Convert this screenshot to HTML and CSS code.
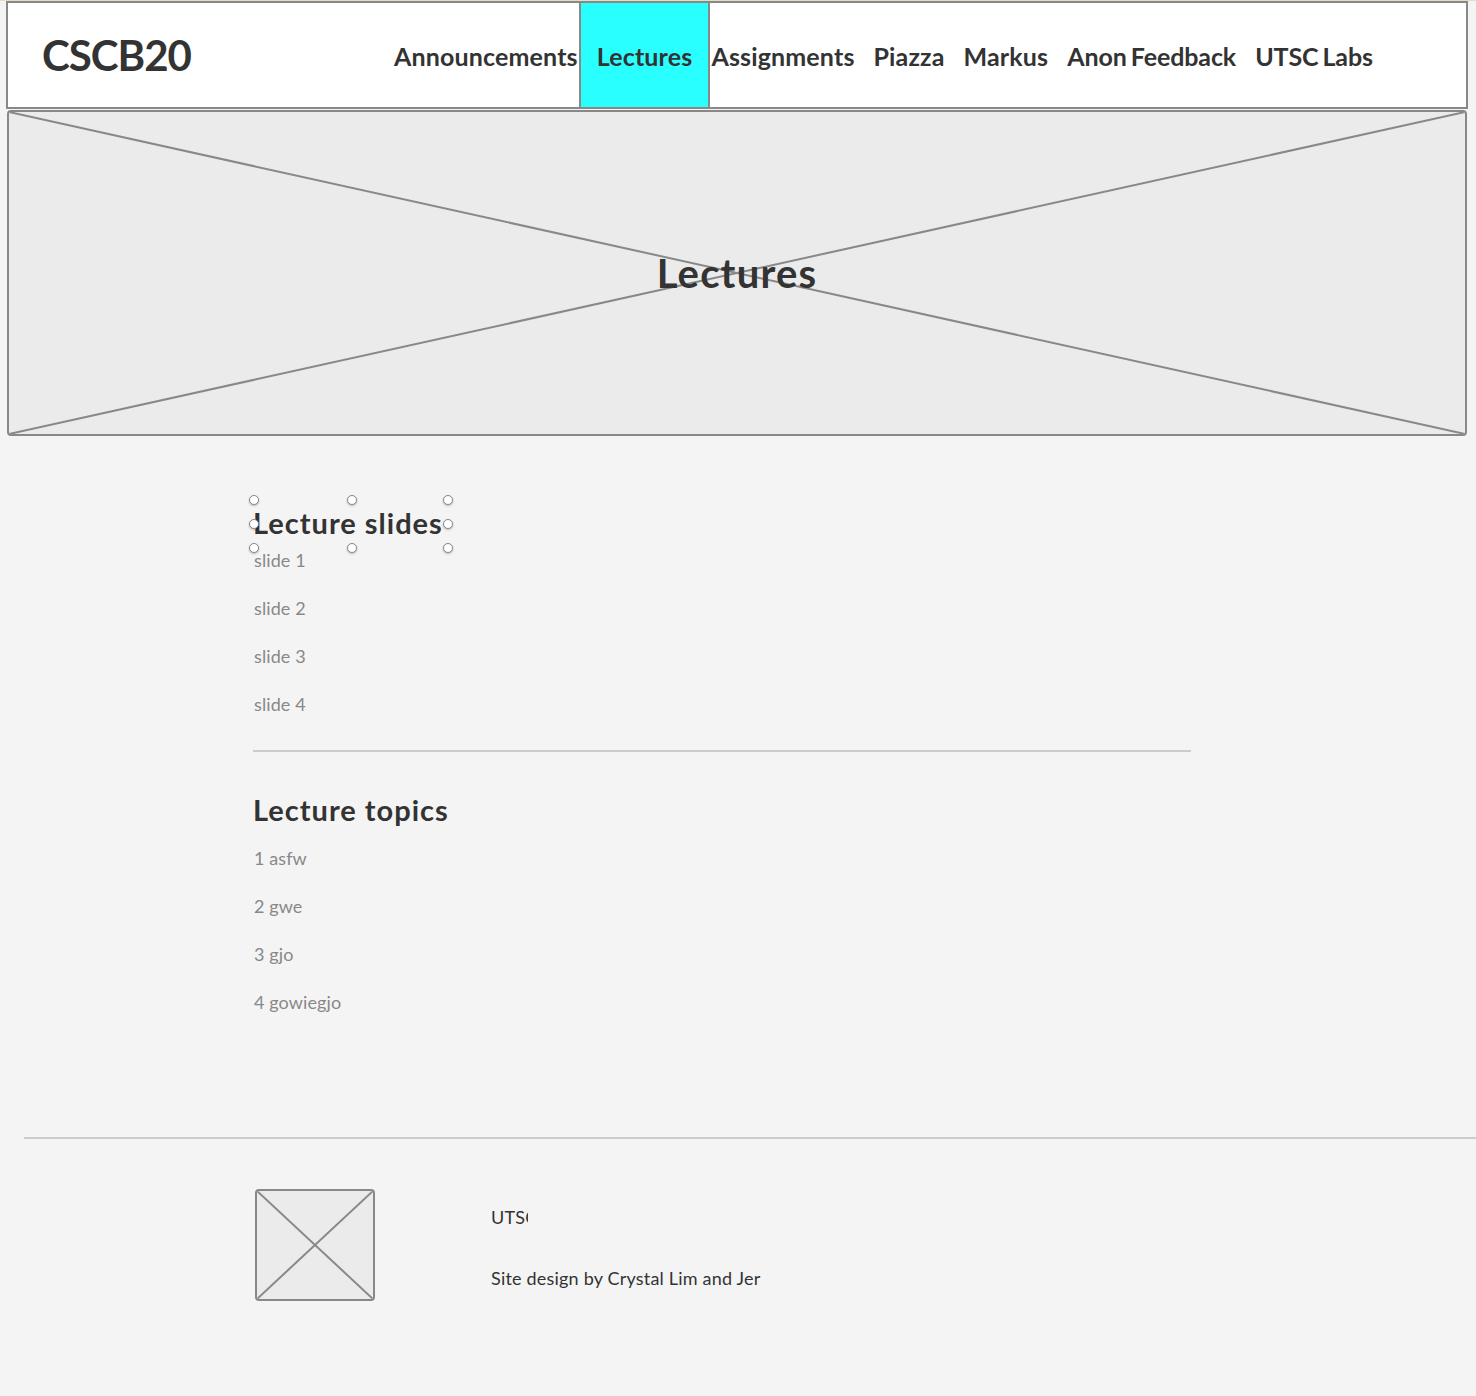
FILE: index.html
```html
<!DOCTYPE html>
<html lang="en">
<head>
<meta charset="utf-8">
<title>CSCB20 - Lectures</title>
<link rel="stylesheet" href="styles.css">
</head>
<body>
<div class="topline"></div>
<header class="site-header">
  <div class="logo">CSCB20</div>
  <nav class="nav">
    <a class="nav-link first" href="#">Announcements</a>
    <a class="nav-link active" href="#">Lectures</a>
    <a class="nav-link after-active" href="#">Assignments</a>
    <a class="nav-link" href="#">Piazza</a>
    <a class="nav-link" href="#">Markus</a>
    <a class="nav-link tight" href="#">Anon Feedback</a>
    <a class="nav-link tight" href="#">UTSC Labs</a>
  </nav>
</header>

<section class="hero">
  <svg class="placeholder-x" viewBox="0 0 100 100" preserveAspectRatio="none" aria-hidden="true">
    <line x1="0" y1="0" x2="100" y2="100" vector-effect="non-scaling-stroke"/>
    <line x1="100" y1="0" x2="0" y2="100" vector-effect="non-scaling-stroke"/>
  </svg>
  <h1 class="hero-title">Lectures</h1>
</section>

<main class="content">
  <section class="block block-slides">
    <div class="selected">
      <h2 class="block-title">Lecture slides</h2>
      <span class="handle h-tl"></span><span class="handle h-tc"></span><span class="handle h-tr"></span>
      <span class="handle h-ml"></span><span class="handle h-mr"></span>
      <span class="handle h-bl"></span><span class="handle h-bc"></span><span class="handle h-br"></span>
    </div>
    <ul class="items">
      <li>slide 1</li>
      <li>slide 2</li>
      <li>slide 3</li>
      <li>slide 4</li>
    </ul>
  </section>
  <hr class="divider">
  <section class="block block-topics">
    <h2 class="block-title">Lecture topics</h2>
    <ul class="items">
      <li>1 asfw</li>
      <li>2 gwe</li>
      <li>3 gjo</li>
      <li>4 gowiegjo</li>
    </ul>
  </section>
</main>

<footer class="site-footer">
  <div class="footer-inner">
    <div class="footer-img">
      <svg class="placeholder-x" viewBox="0 0 100 100" preserveAspectRatio="none" aria-hidden="true">
        <line x1="0" y1="0" x2="100" y2="100" vector-effect="non-scaling-stroke"/>
        <line x1="100" y1="0" x2="0" y2="100" vector-effect="non-scaling-stroke"/>
      </svg>
    </div>
    <div class="footer-text">
      <div class="footer-clip">UTSC</div>
      <div class="footer-credit">Site design by Crystal Lim and Jer</div>
    </div>
  </div>
</footer>
</body>
</html>
```

FILE: styles.css
```css
* { box-sizing: border-box; }

html, body {
  margin: 0;
  padding: 0;
  background: #f4f4f4;
  font-family: "Lato", "Open Sans", sans-serif;
  color: #333;
}

body {
  min-height: 1396px;
}

.topline {
  height: 1px;
  background: #e6dcc2;
}

.site-header {
  margin: 0 8px 0 6px;
  height: 108px;
  background: #fff;
  border: 2px solid #888;
  display: grid;
  grid-template-columns: 386px 1fr;
  align-items: stretch;
}

.logo {
  padding-left: 34px;
  display: flex;
  align-items: center;
  font-size: 42px;
  font-weight: 700;
  color: #333;
  letter-spacing: -1px;
}

.nav {
  display: flex;
  align-items: stretch;
}

.nav-link {
  display: flex;
  align-items: center;
  padding-top: 2px;
  margin-left: 19px;
  font-size: 25px;
  letter-spacing: 0.15px;
  font-weight: 700;
  color: #333;
  text-decoration: none;
  white-space: nowrap;
}

.nav-link.tight {
  letter-spacing: -0.1px;
  word-spacing: -2px;
}

.nav-link.first { margin-left: 0; }

.nav-link.active {
  margin-left: 1px;
  padding: 2px 16px 0 16px;
  background: #2affff;
  border-left: 2px solid #888;
  border-right: 2px solid #888;
}

.nav-link.after-active { margin-left: 1px; }

.hero {
  position: relative;
  margin: 1px 9px 0 7px;
  height: 326px;
  background: #ebebeb;
  border: 2px solid #888;
  border-radius: 4px;
  display: flex;
  align-items: center;
  justify-content: center;
  overflow: hidden;
}

.placeholder-x {
  position: absolute;
  inset: 0;
  width: 100%;
  height: 100%;
}

.placeholder-x line {
  stroke: #888;
  stroke-width: 2;
}

.hero-title {
  position: relative;
  margin: 0;
  font-size: 40px;
  letter-spacing: 1.2px;
  font-weight: 700;
  color: #333;
}

.content {
  margin-left: 253px;
  width: 938px;
  padding-top: 70px;
}

.block-title {
  margin: 0;
  font-size: 29px;
  letter-spacing: 1px;
  line-height: 34px;
  font-weight: 700;
  color: #333;
  white-space: nowrap;
}

.selected {
  position: relative;
  width: 194px;
}

.handle {
  position: absolute;
  width: 10px;
  height: 10px;
  border-radius: 50%;
  background: #fff;
  border: 1px solid #888;
  box-shadow: 0 1px 2px rgba(0,0,0,0.25);
  margin: -5px 0 0 -5px;
}

.h-tl { left: 1px; top: -6px; }
.h-tc { left: 99px; top: -6px; }
.h-tr { left: 195px; top: -6px; }
.h-ml { left: 1px; top: 18px; }
.h-mr { left: 195px; top: 18px; }
.h-bl { left: 1px; top: 42px; }
.h-bc { left: 99px; top: 42px; }
.h-br { left: 195px; top: 42px; }

.items {
  list-style: none;
  margin: 0;
  padding: 0 0 0 1px;
  display: flex;
  flex-direction: column;
  gap: 24px;
}

.items li {
  font-size: 18px;
  letter-spacing: 0.1px;
  line-height: 24px;
  color: #888;
}

.block-slides .items { margin-top: 8px; }
.block-topics .items { margin-top: 19px; }

.divider {
  margin: 34px 0 0 0;
  border: 0;
  height: 2px;
  background: #ccc;
}

.block-topics { margin-top: 41px; }

.site-footer {
  margin-top: 123px;
  margin-left: 24px;
  border-top: 2px solid #ccc;
}

.footer-inner {
  display: flex;
  align-items: flex-start;
  padding: 50px 0 96px 231px;
}

.footer-img {
  position: relative;
  width: 120px;
  height: 112px;
  background: #ebebeb;
  border: 2px solid #888;
  border-radius: 4px;
  overflow: hidden;
}

.footer-text {
  margin-left: 116px;
  padding-top: 16px;
  font-size: 18px;
  letter-spacing: 0.2px;
  line-height: 24px;
  color: #333;
}

.footer-clip {
  width: 37px;
  overflow: hidden;
  white-space: nowrap;
}

.footer-credit {
  margin-top: 37px;
  white-space: nowrap;
}
```
